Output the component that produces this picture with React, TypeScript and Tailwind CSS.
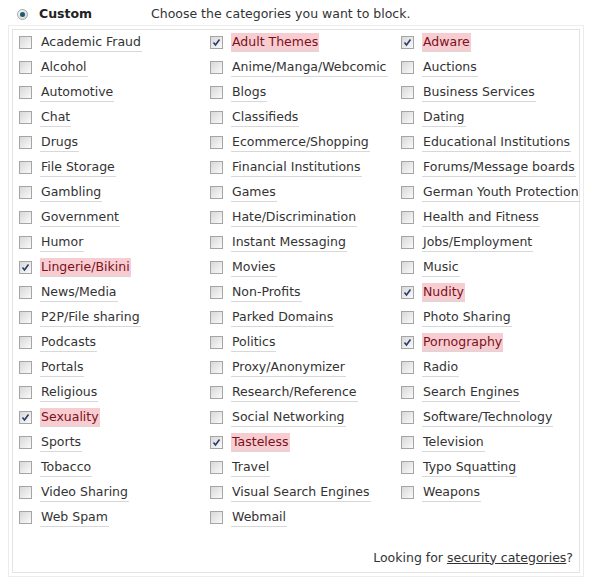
const rows: [string, boolean][] = [
  ["Academic Fraud", false], ["Adult Themes", true], ["Adware", true],
  ["Alcohol", false], ["Anime/Manga/Webcomic", false], ["Auctions", false],
  ["Automotive", false], ["Blogs", false], ["Business Services", false],
  ["Chat", false], ["Classifieds", false], ["Dating", false],
  ["Drugs", false], ["Ecommerce/Shopping", false], ["Educational Institutions", false],
  ["File Storage", false], ["Financial Institutions", false], ["Forums/Message boards", false],
  ["Gambling", false], ["Games", false], ["German Youth Protection", false],
  ["Government", false], ["Hate/Discrimination", false], ["Health and Fitness", false],
  ["Humor", false], ["Instant Messaging", false], ["Jobs/Employment", false],
  ["Lingerie/Bikini", true], ["Movies", false], ["Music", false],
  ["News/Media", false], ["Non-Profits", false], ["Nudity", true],
  ["P2P/File sharing", false], ["Parked Domains", false], ["Photo Sharing", false],
  ["Podcasts", false], ["Politics", false], ["Pornography", true],
  ["Portals", false], ["Proxy/Anonymizer", false], ["Radio", false],
  ["Religious", false], ["Research/Reference", false], ["Search Engines", false],
  ["Sexuality", true], ["Social Networking", false], ["Software/Technology", false],
  ["Sports", false], ["Tasteless", true], ["Television", false],
  ["Tobacco", false], ["Travel", false], ["Typo Squatting", false],
  ["Video Sharing", false], ["Visual Search Engines", false], ["Weapons", false],
  ["Web Spam", false], ["Webmail", false],
];

const Box = ({ checked }: { checked: boolean }) => (
  <span className="relative flex h-[13px] w-[13px] shrink-0 items-center justify-center border border-[#a5a5a5] bg-gradient-to-br from-[#d8d8d8] to-[#fafafa]">
    {checked && (
      <svg viewBox="0 0 11 11" className="h-[11px] w-[11px]">
        <path d="M2.5 5.5 L4.5 8 L8.5 2.5" fill="none" stroke="#2a3a6a" strokeWidth="1.6" />
      </svg>
    )}
  </span>
);

export default function App() {
  return (
    <div className="w-[595px] bg-white text-[12.5px] text-[#333] [font-family:'DejaVu_Sans',Verdana,sans-serif]">
      <div className="flex h-[25px] items-center pl-[17px] pt-[3px]">
        <span className="flex h-[11px] w-[11px] items-center justify-center rounded-full border border-[#9aa] bg-gradient-to-br from-[#f4f4f4] to-[#d8d8d8]">
          <span className="h-[5px] w-[5px] rounded-full bg-[#1d5a6e]" />
        </span>
        <span className="ml-[11px] w-[112px] font-bold text-[#222]">Custom</span>
        <span>Choose the categories you want to block.</span>
      </div>
      <div className="ml-[8px] mr-[11px] border border-[#ececec] p-[3px]">
        <div className="border border-[#e4e4e4] pb-[4px] pl-[3px] pr-[6px]">
          <div className="grid grid-cols-[191px_191px_191px]">
            {rows.map(([label, checked]) => (
              <div key={label} className="flex h-[25px] items-center pl-[3px]">
                <Box checked={checked} />
                <span
                  className={`ml-[8px] whitespace-nowrap border-b border-[#d8d8d8] px-[1px] leading-[18px] ${
                    checked ? "bg-[#f8cdd1] text-[#7a1020]" : ""
                  }`}
                >
                  {label}
                </span>
              </div>
            ))}
          </div>
          <div className="mt-[18px] flex h-[20px] items-center justify-end">
            Looking for&nbsp;<span className="underline">security categories</span>?
          </div>
        </div>
      </div>
    </div>
  );
}
